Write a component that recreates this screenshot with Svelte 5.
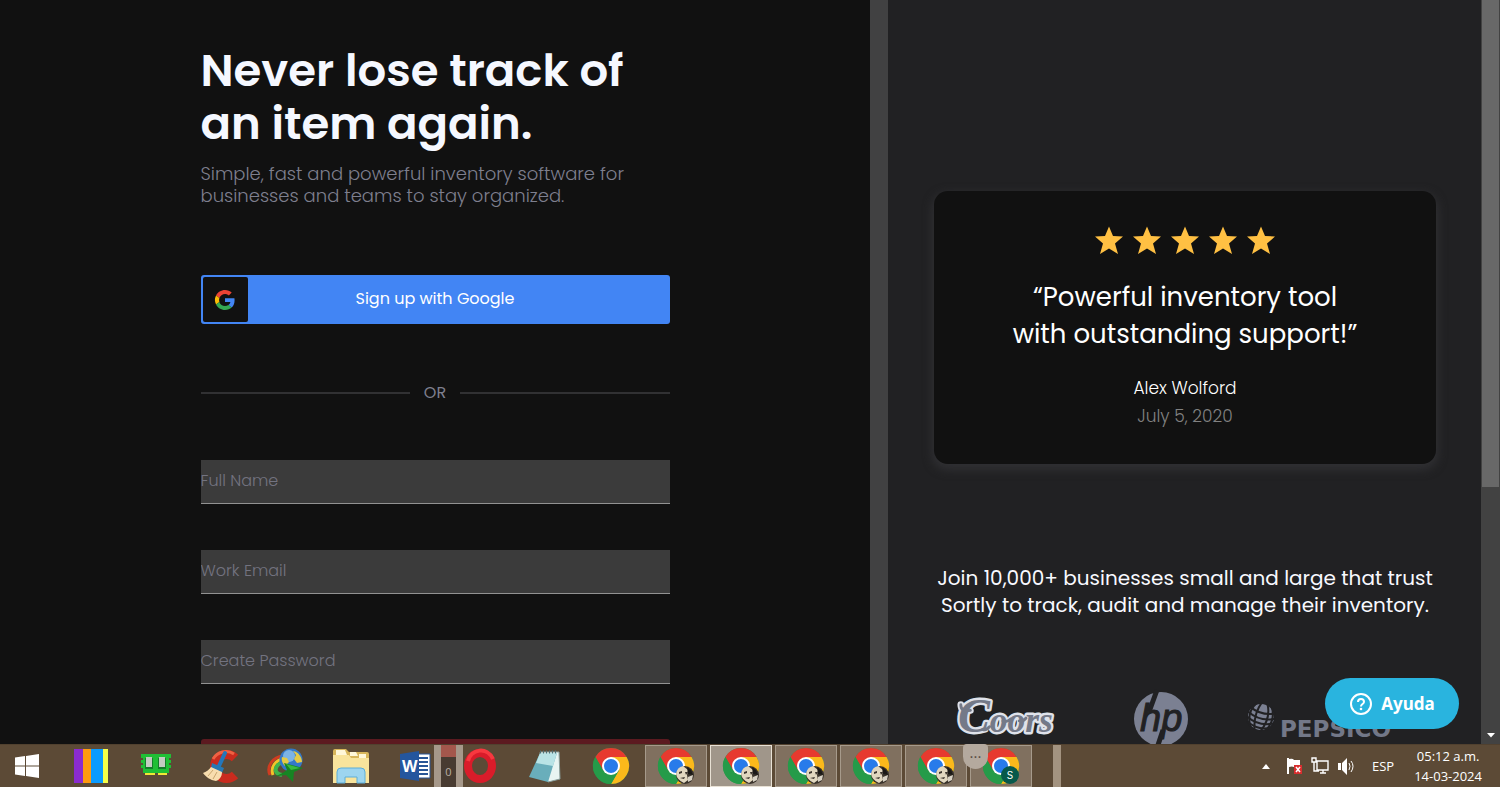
<script lang="ts">
  const fields = [
    { id: 'full-name', label: 'Full Name', type: 'text' },
    { id: 'work-email', label: 'Work Email', type: 'email' },
    { id: 'password', label: 'Create Password', type: 'password' }
  ];
  const apps = [
    { kind: 'stripes', name: 'Color bars' },
    { kind: 'memory', name: 'Memory' },
    { kind: 'cleaner', name: 'Cleaner' },
    { kind: 'download', name: 'Downloads' },
    { kind: 'folder', name: 'Files' },
    { kind: 'word', name: 'Word' },
    { kind: 'opera', name: 'Opera' },
    { kind: 'notepad', name: 'Notepad' },
    { kind: 'chrome', name: 'Chrome' },
    { kind: 'chrome', name: 'Chrome window 1', open: true, badge: 'photo' },
    { kind: 'chrome', name: 'Chrome window 2', open: true, active: true, badge: 'photo' },
    { kind: 'chrome', name: 'Chrome window 3', open: true, badge: 'photo' },
    { kind: 'chrome', name: 'Chrome window 4', open: true, badge: 'photo' },
    { kind: 'chrome', name: 'Chrome window 5', open: true, badge: 'photo' },
    { kind: 'chrome', name: 'Chrome window 6', open: true, badge: 'letter' }
  ];
</script>

{#snippet appIcon(kind: string, badge: string | undefined)}
  <svg class="app-icon" viewBox="0 0 36 36" aria-hidden="true">
    {#if kind === 'stripes'}
      <path fill="#8a2bd0" d="M1 1h9v34H1z" /><path fill="#ff9a10" d="M10 1h8v34h-8z" />
      <path fill="#0a9bff" d="M18 1h12v34H18z" /><path fill="#f6ff48" d="M30 1h5v34h-5z" />
    {:else if kind === 'memory'}
      <path fill="#20bf35" d="M3 6h30v4h-2v2h2v3h-2v2h2v3h-2v5H5v-5H3v-3h2v-2H3v-3h2v-2H3z" />
      <path fill="#147e2a" d="M7 10h8v11H7zM20 10h8v11h-8z" />
      <path fill="#c4cbc2" d="M8 9h6v10H8zM21 9h6v10h-6z" />
      <path fill="#f0e735" d="M7 25h10v2H7zM20 25h9v2h-9z" />
    {:else if kind === 'cleaner'}
      <path fill="none" stroke="#c92b1e" stroke-width="9" d="M32 10A12 12 0 1 0 32 27" />
      <path fill="none" stroke="#ef6243" stroke-width="3" d="M31 6A15 15 0 0 0 10 11" />
      <path stroke="#2477bb" stroke-width="4" stroke-linecap="round" d="M22 5l-6 13" />
      <path fill="#2878b2" d="M9 15l12 5-2 5-11-5z" />
      <path fill="#f8ddae" d="M8 19l11 5c0 5-3 8-6 9C7 32 3 29 0 25c3-1 6-3 8-6z" />
      <path fill="none" stroke="#c9a56d" d="M10 22l-5 6M14 24l-4 7" />
    {:else if kind === 'download'}
      <path fill="none" stroke="#cf3c20" stroke-width="3" d="M15 8C5 9-2 18 2 27" />
      <path fill="none" stroke="#f2c329" stroke-width="3" d="M15 11C8 12 2 19 5 27" />
      <path fill="none" stroke="#40b34b" stroke-width="4" d="M15 14c-8 3-11 11-1 13" />
      <circle cx="23" cy="12" r="11.500" fill="#3478c8" />
      <circle cx="21" cy="8" r="6" fill="#8fc2ec" opacity=".8" />
      <path fill="#e4ca46" d="M25 3c6 1 9 7 9 11l-5 1-3-4 2-4zM14 9l5 1 2 4-4 4c-2-2-4-5-3-9z" />
      <path fill="#168423" d="M16 15l19 5-9 4-1 10-7-7-16 2c8-1 13-4 17-7z" />
      <path fill="#39bb3e" d="M18 16l14 4-9 2z" />
    {:else if kind === 'folder'}
      <path fill="#d8b65b" d="M0 3q0-2 2-2h11l3 3h18q2 0 2 2v28H0z" />
      <path fill="#fff7d8" d="M3 2h9l2 5H3zM17 4h6l2 4h-8zM26 6h7v5h-7z" />
      <path fill="#f9e49c" d="M0 7h16l2 3h18v25H0z" />
      <path fill="#9dd5ef" d="M4 24q0-4 4-4h20q4 0 4 4v11h-8v-6H12v6H4z" />
      <path fill="none" stroke="#5caed8" d="M4 35V24q0-4 4-4h20q4 0 4 4v11h-8v-6H12v6z" />
    {:else if kind === 'word'}
      <path fill="#fff" stroke="#285596" d="M17 6h15v24H17z" />
      <path stroke="#285596" stroke-width="2" d="M20 10h10M20 14h10M20 18h10M20 22h10M20 26h10" />
      <path fill="#24569e" d="M2 6l19-3v30L2 30z" />
      <text x="4" y="24" fill="#fff" font-family="Open Sans, sans-serif" font-weight="700" font-size="16">W</text>
    {:else if kind === 'opera'}
      <ellipse cx="17" cy="18" rx="12" ry="13" fill="none" stroke="#d91c2a" stroke-width="8" />
      <path fill="none" stroke="#f7383f" stroke-width="4" d="M5 13C8 1 24-2 30 11" />
    {:else if kind === 'notepad'}
      <path fill="#e8f4f2" stroke="#8a9f9c" d="M12 4h19l1 27-12 3z" />
      <path fill="#69aebb" d="M12 5h17l-9 29-19-5z" />
      <path fill="#b9e3e6" d="M12 5h17l-4 13-17-3z" />
      <path stroke="#4e6e73" stroke-dasharray="1 2" stroke-width="3" d="M12 4h18" />
    {:else}
      <circle cx="18" cy="18" r="18" fill="#259b49" />
      <path fill="#e7392f" d="M2.400 9A18 18 0 0 1 33.600 9H18v9l-7.800 4.500z" />
      <path fill="#fbb91b" d="M33.600 9A18 18 0 0 1 18 36l7.800-13.500L18 9z" />
      <path fill="#259b49" d="M2.400 9l7.800 13.500L18 27l7.800-4.500L18 36A18 18 0 0 1 2.400 9z" />
      <circle cx="18" cy="18" r="9" fill="#fff" /><circle cx="18" cy="18" r="7" fill="#287bea" />
    {/if}
    {#if badge === 'photo'}
      <circle cx="27" cy="27" r="9" fill="#3a332b" />
      <path fill="#e2d8c0" d="M18 26q1-7 7-8l5 4-1 5 1 5-4 3q-7-3-8-9z" />
      <path fill="#3c352e" d="M21 24l3-1v2l-3 1zM27 24h3l-2 3zM22 30l5-1-1 2z" />
      <path fill="#d8d2c4" d="M30 29l5-2-1 5-4 2z" />
      <path fill="#1b1917" d="M29 19l4 3 2 5-5-1z" />
    {:else if badge === 'letter'}
      <circle cx="27" cy="27" r="9" fill="#07594b" />
      <text x="27" y="31" fill="#fff" text-anchor="middle" font-family="Inter, sans-serif" font-size="10">S</text>
    {/if}
  </svg>
{/snippet}

<div class="desktop">
  <div class="page">
    <main>
      <div class="signup">
        <h1>Never lose track of<br />an item again.</h1>
        <p class="intro">Simple, fast and powerful inventory software for<br />businesses and teams to stay organized.</p>
        <button class="google" type="button">
          <span class="g-box">
            <svg viewBox="0 0 48 48" aria-hidden="true">
              <path fill="#ea4335" d="M24 9.500c3.500 0 6.700 1.200 9.200 3.600l6.900-6.900C35.900 2.400 30.500 0 24 0 14.600 0 6.500 5.400 2.600 13.200l8 6.200C12.400 13.700 17.700 9.500 24 9.500z" />
              <path fill="#4285f4" d="M47 24.600c0-1.600-.2-3.100-.4-4.600H24v9h12.900c-.6 3-2.200 5.500-4.700 7.200l7.700 6C44.400 38 47 32 47 24.600z" />
              <path fill="#fbbc05" d="M10.500 28.600A14.500 14.500 0 0 1 10.500 19.400l-8-6.200A24 24 0 0 0 2.500 34.800z" />
              <path fill="#34a853" d="M24 48c6.500 0 11.900-2.100 15.900-5.800l-7.700-6c-2.200 1.500-4.900 2.300-8.200 2.300-6.300 0-11.600-4.200-13.500-9.900l-8 6.200C6.500 42.600 14.600 48 24 48z" />
            </svg>
          </span>
          <span class="g-text">Sign up with Google</span>
        </button>
        <div class="or"><span>OR</span></div>
        <form>
          {#each fields as field}
            <input id={field.id} type={field.type} placeholder={field.label} aria-label={field.label} />
          {/each}
          <button class="submit" type="button" aria-label="Sign up"></button>
        </form>
      </div>
    </main>
    <div class="gutter"></div>
    <aside>
      <section class="card">
        <div class="stars">
          {#each [1, 2, 3, 4, 5] as star (star)}
            <svg viewBox="0 0 28 28" aria-hidden="true"><path fill="#ffc043" d="M14 0l4 9.500 10 .5-8 7 3 10.500-9-5.500-9 5.500L8 17 0 10l10-.5z" /></svg>
          {/each}
        </div>
        <blockquote>“Powerful inventory tool<br />with outstanding support!”</blockquote>
        <p class="author">Alex Wolford</p>
        <p class="date">July 5, 2020</p>
      </section>
      <p class="trust">Join 10,000+ businesses small and large that trust<br />Sortly to track, audit and manage their inventory.</p>
      <div class="logos">
        <svg class="coors" viewBox="0 0 96 48" role="img" aria-label="Coors">
          <path fill="none" stroke="#dfe2ea" stroke-width="7" stroke-linecap="round" d="M15 15q-10 2-10-6" />
          <text class="script" x="2" y="38" font-size="37"><tspan font-size="50">C</tspan>oors</text>
          <path fill="none" stroke="#747988" stroke-width="3" stroke-linecap="round" d="M15 15q-10 2-10-6M28 35q4 1 7-3M49 26q4 2 8-2M66 26q4 1 7-3" />
        </svg>
        <svg class="hp" viewBox="0 0 54 54" role="img" aria-label="HP">
          <circle cx="27" cy="27" r="27" fill="#7b8092" />
          <path stroke="#212123" stroke-width="5" d="M23-2l-8 22M29 38l-6 18" />
          <text x="6" y="39" fill="#212123" stroke="#212123" font-family="Liberation Sans, sans-serif" font-style="italic" font-size="38">hp</text>
        </svg>
        <div class="pepsico">
          <svg viewBox="0 0 26 26" aria-hidden="true">
            <circle cx="13" cy="13" r="13" fill="#7b8092" />
            <g fill="none" stroke="#212123" stroke-width="2" transform="rotate(15 13 13)"><path d="M10-1q-5 13 0 28M16-1q7 13 0 28M5 1q-7 11 0 24M21 1q7 11 0 24" /><path d="M0 6q13 6 26 0M-1 11q14 7 28 0M-1 16q14 7 28 0M1 21q12 6 24 0" /></g>
          </svg>
          <span>PEPSICO</span>
        </div>
      </div>
      <button class="help" type="button">
        <svg viewBox="0 0 24 24" aria-hidden="true"><circle cx="12" cy="12" r="10" fill="none" stroke="#fff" stroke-width="2" /><path fill="none" stroke="#fff" stroke-width="2" d="M9 10q0-3 3-3t3 3q0 1-2 2.500-1 .8-1 2" /><circle cx="12" cy="17" r="1.300" fill="#fff" /></svg>
        Ayuda
      </button>
    </aside>
    <div class="scroll">
      <div class="thumb"></div>
      <svg viewBox="0 0 10 6" aria-hidden="true"><path fill="#fff" d="M1 1h8L5 5.500z" /></svg>
    </div>
  </div>

  <footer>
    <button class="start" type="button" aria-label="Start">
      <svg viewBox="0 0 24 24" aria-hidden="true"><path fill="#fff" d="M0 3.500l10-1.500v9.500H0zM11 2L24 0v11.500H11zM0 12.500h10V22L0 20.500zM11 12.500h13V24l-13-2z" /></svg>
    </button>
    <nav>
      {#each apps as app}
        <button type="button" class="app" class:open={app.open} class:active={app.active} aria-label={app.name}>
          {@render appIcon(app.kind, app.badge)}
        </button>
      {/each}
    </nav>
    <div class="tray">
      <svg class="up" viewBox="0 0 8 5" aria-hidden="true"><path fill="#fff" d="M0 5l4-5 4 5z" /></svg>
      <svg viewBox="0 0 18 18" aria-hidden="true"><path fill="#fff" d="M2 1h2v16H2zM4 2q4-1 5 1h6v7H9q-2-1-5 0z" /><path fill="#d92e2e" d="M9 8h8v9H9z" /><path stroke="#fff" stroke-width="1.500" d="M11 10l4 5M15 10l-4 5" /></svg>
      <svg viewBox="0 0 18 18" aria-hidden="true"><path fill="none" stroke="#fff" stroke-width="1.400" d="M6 4h11v9H6zM9 16h6M12 13v3M3 5v9h5M1 1h4v4H1z" /></svg>
      <svg viewBox="0 0 18 18" aria-hidden="true"><path fill="#fff" d="M1 6h3v7H1zM5 6l5-5v17l-5-5z" /><path fill="none" stroke="#fff" d="M12 6q2 3 0 7M14 4q4 5 0 11" /></svg>
      <span class="lang">ESP</span>
      <div class="clock"><span>05:12 a.m.</span><span>14-03-2024</span></div>
    </div>
    <div class="ghost-volume">0</div>
    <div class="ghost-dots">···</div>
    <div class="ghost-bar"></div>
  </footer>
</div>

<style>
  :global(body) { margin: 0; background: #111; }
  * { box-sizing: border-box; }
  button { border: 0; padding: 0; font: inherit; color: inherit; }
  h1, p, blockquote { margin: 0; }
  svg { display: block; overflow: visible; }
  .desktop { display: grid; grid-template-rows: minmax(0, 1fr) 43px; height: 100vh; overflow: hidden; font-family: Poppins, Inter, sans-serif; color: #f8f9ff; }
  .page { display: grid; grid-template-columns: minmax(0, 870fr) 18px minmax(0, 593fr) 19px; overflow: hidden; min-height: 0; }
  main { background: #111; overflow: hidden; padding: 44px 24px 0; }
  .signup { max-width: 469px; margin: 0 auto; }
  h1 { font-size: 45px; line-height: 53px; font-weight: 600; color: #f5f8ff; white-space: nowrap; }
  .intro { margin-top: 13px; font-size: 18px; line-height: 22px; font-weight: 300; color: #7e7f8e; white-space: nowrap; }
  .google { display: flex; align-items: center; width: 100%; height: 49px; margin-top: 68px; padding: 2px; border-radius: 3px; background: #4285f4; }
  .g-box { display: grid; place-items: center; width: 45px; height: 45px; border-radius: 2px; background: #111; }
  .g-box svg { width: 20px; height: 20px; }
  .g-text { flex: 1; padding: 0 45px 2px 0; font-size: 16px; color: #fff; }
  .or { display: flex; align-items: center; gap: 14px; margin-top: 57px; font-size: 16px; line-height: 24px; color: #7e7f8e; }
  .or::before, .or::after { content: ""; flex: 1; height: 2px; background: #313133; }
  form { display: grid; gap: 46px; margin-top: 55px; }
  input { width: 100%; height: 44px; border: 0; border-bottom: 1px solid #929292; border-radius: 0; padding: 0 0 3px; background: #3b3b3b; color: #fff; font: 300 16px Poppins, Inter, sans-serif; }
  input::placeholder { color: #737380; opacity: 1; }
  .submit { height: 49px; margin-top: 9px; background: #5c1a20; border-radius: 3px; }
  .gutter { background: #414142; }
  aside { position: relative; background: #212123; padding: 191px 45px 0 46px; overflow: hidden; text-align: center; }
  .card { padding: 35px 20px 34px; border-radius: 14px; background: #111; box-shadow: 0 4px 10px 2px #303033; }
  .stars { display: flex; justify-content: center; gap: 10px; }
  .stars svg { width: 28px; height: 29px; }
  blockquote { margin-top: 24px; font-size: 26px; line-height: 37px; color: #fff; white-space: nowrap; }
  .author { margin-top: 21px; font-size: 17px; line-height: 28px; font-weight: 300; color: #fff; }
  .date { font-size: 17px; line-height: 28px; font-weight: 300; color: #818181; }
  .trust { margin-top: 101px; font-size: 20px; line-height: 27px; white-space: nowrap; display: flex; justify-content: center; }
  .logos { display: grid; grid-template-columns: repeat(3, 159px); justify-items: center; align-items: center; margin: 73px 0 0 -12px; }
  .coors { width: 94px; height: 46px; }
  .script { fill: #747988; stroke: #dfe2ea; stroke-width: 5px; stroke-linejoin: round; paint-order: stroke; font-family: "Liberation Serif", serif; font-style: italic; font-weight: 700; }
  .hp { width: 54px; height: 54px; }
  .pepsico { display: flex; align-items: center; gap: 6px; color: #737888; }
  .pepsico svg { width: 26px; height: 26px; margin-bottom: 4px; }
  .pepsico span { padding-top: 20px; font: 700 23px/24px "DejaVu Sans", sans-serif; }
  .help { position: absolute; right: 22px; bottom: 15px; display: flex; align-items: center; justify-content: center; gap: 8px; width: 134px; height: 51px; border-radius: 26px; background: #29b4df; color: #fff; font: 700 17px "Noto Sans", sans-serif; }
  .help svg { width: 24px; height: 24px; }
  .scroll { display: flex; flex-direction: column; align-items: center; justify-content: space-between; padding: 0 1px 6px; background: #424242; }
  .scroll svg { width: 10px; height: 6px; }
  .thumb { width: 100%; height: 66%; background: #686868; }
  footer { position: relative; display: flex; background: #5c4a36; border-top: 1px solid #51412f; font-family: "Open Sans", sans-serif; }
  .start { display: grid; place-items: center; width: 53px; margin-right: 7px; background: none; }
  .start svg { width: 24px; height: 24px; }
  nav { display: flex; gap: 3px; }
  .app { display: grid; place-items: center; width: 62px; background: none; }
  .app.open { background: #80705f; border: 1px solid #a69a8b; }
  .app.active { background: #a0968a; border-color: #e8e1d5; }
  .app-icon { width: 36px; height: 36px; }
  .tray { display: flex; align-items: center; gap: 8px; margin-left: auto; padding-right: 18px; color: #fff; font-size: 13px; }
  .tray svg { width: 18px; height: 18px; }
  .tray .up { width: 8px; height: 5px; margin-right: 7px; }
  .lang { margin: 0 12px 0 9px; }
  .clock { display: grid; line-height: 20px; text-align: center; }
  .ghost-volume { position: absolute; left: 434px; top: 0; display: grid; place-items: end center; width: 29px; height: 42px; padding-bottom: 8px; border: solid #a6988a; border-width: 0 7px; background: linear-gradient(#a4574c 0 12px, #483b31 12px); color: #bbb0a3; font-size: 11px; }
  .ghost-dots { position: absolute; left: 963px; top: -1px; width: 25px; height: 25px; border-radius: 4px 4px 13px 13px; background: #b4a99e; color: #564b42; line-height: 25px; text-align: center; font-size: 15px; }
  .ghost-bar { position: absolute; left: 1053px; top: 0; width: 8px; height: 42px; background: #a39380; }
</style>
